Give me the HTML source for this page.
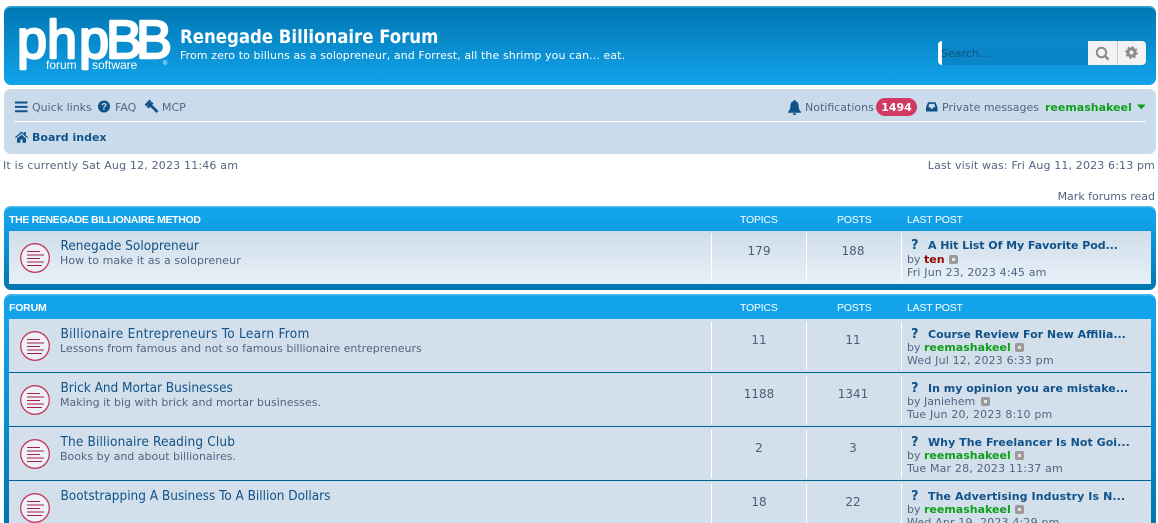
<!DOCTYPE html>
<html><head><meta charset="utf-8"><style>
html,body{margin:0;padding:0;background:#fff;width:1158px;height:523px;overflow:hidden}
body{position:relative;font:11px/14px "DejaVu Sans",sans-serif;color:#536482}
.a{position:absolute}
.t{position:absolute;white-space:nowrap;line-height:14px;transform:translateY(1px)}
.l{color:#105289}
.b{font-weight:bold}
.h{font:bold 10.5px/14px "Liberation Sans",sans-serif;color:#fff;letter-spacing:-.2px}
.ti{font:13.5px/16px "DejaVu Sans Condensed","DejaVu Sans",sans-serif;color:#105289;margin-left:.5px}
.n{font-size:12px;text-align:center;width:60px;color:#4c5d77}
.g{font-weight:bold;color:#0f9f1a}
.d{letter-spacing:.17px}
.s{letter-spacing:.05px}
.v{position:absolute;width:1px;background:#fff}
.x{position:absolute;width:9px;height:9px;background:#9a9a9a;border-radius:2px}
.x:after{content:"";position:absolute;left:3px;top:3px;width:3px;height:3px;background:#e6e6e6}
svg{position:absolute;overflow:visible}
</style></head><body>
<!-- header -->
<div class="a" style="left:4px;top:6px;width:1152px;height:79px;border-radius:7px;background:linear-gradient(#0076b1,#12a3eb);box-shadow:inset 0 1.5px 0 #36a8dc"></div>
<svg style="left:0;top:0" width="200" height="85">
<text x="17 47 79 106 136" y="58" font-family="Liberation Sans" font-size="54" fill="#fff" stroke="#fff" stroke-width="2.4" stroke-linejoin="round">phpBB</text>
<text x="46" y="69" font-family="Liberation Sans" font-size="12" fill="#fff">forum</text>
<text x="92" y="69" font-family="Liberation Sans" font-size="12" fill="#fff">software</text>
<text x="163" y="65" font-family="Liberation Sans" font-size="6" fill="#fff">®</text>
</svg>
<div class="t b" style="left:180px;top:27px;font:bold 18.4px/20px 'DejaVu Sans Condensed','DejaVu Sans',sans-serif;color:#fff">Renegade Billionaire Forum</div>
<div class="t" style="left:180px;top:48px;color:#fff;letter-spacing:.09px">From zero to billuns as a solopreneur, and Forrest, all the shrimp you can... eat.</div>
<!-- search -->
<div class="a" style="left:938px;top:41px;width:150px;height:24px;background:#0a86c8;border-radius:4px 0 0 4px;overflow:hidden"><div style="width:4px;height:24px;background:#fff"></div></div>
<div class="t" style="left:941px;top:46px;color:#14527c">Search...</div>
<div class="a" style="left:1088px;top:41px;width:58px;height:24px;background:#f2f2f2;border-radius:0 4px 4px 0"></div>
<div class="a" style="left:1117px;top:41px;width:1px;height:24px;background:#c8c8c8"></div>
<svg style="left:1095px;top:46px" width="15" height="15"><circle cx="6.5" cy="6.5" r="4.7" fill="none" stroke="#8a8a8a" stroke-width="2"/><path d="M10 10l3.6 3.6" stroke="#8a8a8a" stroke-width="2.4"/></svg>
<svg style="left:1125px;top:46px" width="14" height="14"><circle cx="6.5" cy="6.5" r="3.6" fill="none" stroke="#8a8a8a" stroke-width="3"/><circle cx="6.5" cy="6.5" r="5.2" fill="none" stroke="#8a8a8a" stroke-width="2.2" stroke-dasharray="2 2.08"/></svg>
<!-- nav -->
<div class="a" style="left:4px;top:89px;width:1152px;height:65px;border-radius:7px;background:#cadceb"></div>
<div class="a" style="left:14px;top:121px;width:1132px;height:1px;background:#fff"></div>
<svg style="left:15px;top:101px" width="13" height="12"><path d="M0 1.500h12.500M0 5.900h12.500M0 10.200h12.500" stroke="#105289" stroke-width="2"/></svg>
<div class="t" style="left:32px;top:100px">Quick links</div>
<svg style="left:98px;top:100px" width="13" height="13"><circle cx="6" cy="6.500" r="6" fill="#105289"/><text x="6" y="10" text-anchor="middle" font-family="Liberation Sans" font-weight="bold" font-size="10" fill="#cadceb">?</text></svg>
<div class="t" style="left:115px;top:100px">FAQ</div>
<svg style="left:145px;top:100px" width="14" height="14"><path d="M.5 5.500L5.500.5M2.600 7.600l5-5M4 3.800l3 3" stroke="#105289" stroke-width="2.600" fill="none"/><path d="M6.500 6l6 6" stroke="#105289" stroke-width="2.800"/></svg>
<div class="t" style="left:162px;top:100px">MCP</div>
<svg style="left:15px;top:131px" width="13" height="12"><path d="M6.500.5L0 6.200l.8.9L6.500 2.300l5.700 4.800.8-.9L10.800 4.300V1H9v1.700zM2 7.500v4.200h3.400V8.400h2.200v3.300H11V7.500L6.500 3.700z" fill="#105289"/></svg>
<div class="t b l" style="left:32px;top:130px">Board index</div>
<svg style="left:788px;top:100px" width="14" height="15"><path d="M6.500 0C7.300 0 7.600.6 7.600 1.300 10 1.900 10.600 3.800 10.600 6c0 3 1 4.500 2.400 5.800v.9H0v-.9C1.400 10.500 2.400 9 2.400 6 2.400 3.800 3 1.900 5.400 1.300 5.400.6 5.700 0 6.500 0zM4.800 13.400h3.400a1.700 1.700 0 0 1-3.400 0z" fill="#105289"/></svg>
<div class="t" style="left:805px;top:100px">Notifications</div>
<div class="a" style="left:876px;top:98px;width:41px;height:18px;border-radius:9px;background:#d13a63"></div>
<div class="t b" style="left:876px;top:100px;width:41px;text-align:center;color:#fff">1494</div>
<svg style="left:925px;top:101px" width="14" height="12"><path d="M1 6.500L3 1.200h7.500L12.500 6.500V10.500H1z" fill="#105289"/><path d="M3.300 6.300L4.300 2.900h5L10.300 6.300H8.300L7.700 7.700H5.800L5.200 6.300z" fill="#cadceb"/></svg>
<div class="t" style="left:942px;top:100px">Private messages</div>
<div class="t g" style="left:1045px;top:100px">reemashakeel</div>
<svg style="left:1137px;top:104px" width="10" height="7"><path d="M0 .5h8.500L4.250 5.500z" fill="#0f9f1a"/></svg>
<!-- info lines -->
<div class="t" style="left:3px;top:158px;letter-spacing:.18px">It is currently Sat Aug 12, 2023 11:46 am</div>
<div class="t" style="right:3px;top:158px;letter-spacing:.15px">Last visit was: Fri Aug 11, 2023 6:13 pm</div>
<div class="t" style="right:3px;top:189px">Mark forums read</div>
<!-- block 1 -->
<div class="a" style="left:4px;top:206px;width:1152px;height:84px;border-radius:7px;background:linear-gradient(#12a3eb 0,#12a3eb 15%,#0076b1 100%);box-shadow:inset 0 1.5px 0 #4dbbee"></div>
<div class="t h" style="left:9px;top:212px;letter-spacing:-.33px">THE RENEGADE BILLIONAIRE METHOD</div>
<div class="t h" style="left:740px;top:212px;font-weight:normal">TOPICS</div>
<div class="t h" style="left:837px;top:212px;font-weight:normal">POSTS</div>
<div class="t h" style="left:907px;top:212px;font-weight:normal">LAST POST</div>
<div class="a" style="left:9px;top:231px;width:1142px;height:53px;background:linear-gradient(#cfdce7,#e7f1f9)"></div>
<div class="v" style="left:711px;top:233px;height:49px"></div><div class="v" style="left:806px;top:233px;height:49px"></div><div class="v" style="left:901px;top:233px;height:49px"></div>
<svg style="left:20px;top:243px" width="30" height="30"><circle cx="15" cy="15" r="14.300" fill="#eef1f5" stroke="#c23a60" stroke-width="1.300"/><path d="M7 8.500h13M7 12h17M7 15.500h13M7 19h17M7 22.500h15" stroke="#a81c4e" stroke-width="1"/></svg>
<div class="t ti" style="left:60px;top:237px">Renegade Solopreneur</div>
<div class="t s" style="left:60px;top:253px;letter-spacing:.08px">How to make it as a solopreneur</div>
<div class="t n" style="left:729px;top:243px">179</div><div class="t n" style="left:823px;top:243px">188</div>
<div class="t b l" style="left:911px;top:238px;font-size:13px">?</div>
<div class="t b l" style="left:928px;top:238px;letter-spacing:-.05px">A Hit List Of My Favorite Pod...</div>
<div class="t" style="left:907px;top:252px">by <span class="b" style="color:#990000">ten</span></div><div class="x" style="left:949px;top:255px"></div>
<div class="t d" style="left:907px;top:265px">Fri Jun 23, 2023 4:45 am</div>
<!-- block 2 -->
<div class="a" style="left:4px;top:294px;width:1152px;height:240px;border-radius:7px 7px 0 0;background:linear-gradient(#12a3eb 0,#12a3eb 25px,#0076b1 230px);box-shadow:inset 0 1.5px 0 #4dbbee"></div>
<div class="t h" style="left:9px;top:300px">FORUM</div>
<div class="t h" style="left:740px;top:300px;font-weight:normal">TOPICS</div>
<div class="t h" style="left:837px;top:300px;font-weight:normal">POSTS</div>
<div class="t h" style="left:907px;top:300px;font-weight:normal">LAST POST</div>
<div class="a" style="left:9px;top:319px;width:1142px;height:210px;background:#d3e0eb"></div>
<div class="a" style="left:9px;top:372px;width:1142px;height:1px;background:#00608f"></div>
<div class="a" style="left:9px;top:426px;width:1142px;height:1px;background:#00608f"></div>
<div class="a" style="left:9px;top:480px;width:1142px;height:1px;background:#00608f"></div>
<div class="v" style="left:711px;top:322px;height:48px"></div><div class="v" style="left:806px;top:322px;height:48px"></div><div class="v" style="left:901px;top:322px;height:48px"></div>
<div class="v" style="left:711px;top:376px;height:48px"></div><div class="v" style="left:806px;top:376px;height:48px"></div><div class="v" style="left:901px;top:376px;height:48px"></div>
<div class="v" style="left:711px;top:430px;height:48px"></div><div class="v" style="left:806px;top:430px;height:48px"></div><div class="v" style="left:901px;top:430px;height:48px"></div>
<div class="v" style="left:711px;top:484px;height:48px"></div><div class="v" style="left:806px;top:484px;height:48px"></div><div class="v" style="left:901px;top:484px;height:48px"></div>
<!-- row 1 -->
<svg style="left:20px;top:331px" width="30" height="30"><circle cx="15" cy="15" r="14.300" fill="#eef1f5" stroke="#c23a60" stroke-width="1.300"/><path d="M7 8.500h13M7 12h17M7 15.500h13M7 19h17M7 22.500h15" stroke="#a81c4e" stroke-width="1"/></svg>
<div class="t ti" style="left:60px;top:325px;letter-spacing:.28px">Billionaire Entrepreneurs To Learn From</div>
<div class="t" style="left:60px;top:341px">Lessons from famous and not so famous billionaire entrepreneurs</div>
<div class="t n" style="left:729px;top:332px">11</div><div class="t n" style="left:823px;top:332px">11</div>
<div class="t b l" style="left:911px;top:327px;font-size:13px">?</div>
<div class="t b l" style="left:928px;top:327px">Course Review For New Affilia...</div>
<div class="t" style="left:907px;top:340px">by <span class="g">reemashakeel</span></div><div class="x" style="left:1015px;top:343px"></div>
<div class="t d" style="left:907px;top:353px">Wed Jul 12, 2023 6:33 pm</div>
<!-- row 2 -->
<svg style="left:20px;top:385px" width="30" height="30"><circle cx="15" cy="15" r="14.300" fill="#eef1f5" stroke="#c23a60" stroke-width="1.300"/><path d="M7 8.500h13M7 12h17M7 15.500h13M7 19h17M7 22.500h15" stroke="#a81c4e" stroke-width="1"/></svg>
<div class="t ti" style="left:60px;top:379px;letter-spacing:-.03px">Brick And Mortar Businesses</div>
<div class="t" style="left:60px;top:395px">Making it big with brick and mortar businesses.</div>
<div class="t n" style="left:729px;top:386px">1188</div><div class="t n" style="left:823px;top:386px">1341</div>
<div class="t b l" style="left:911px;top:381px;font-size:13px">?</div>
<div class="t b l" style="left:928px;top:381px">In my opinion you are mistake...</div>
<div class="t" style="left:907px;top:394px">by Janiehem</div><div class="x" style="left:981px;top:397px"></div>
<div class="t d" style="left:907px;top:407px">Tue Jun 20, 2023 8:10 pm</div>
<!-- row 3 -->
<svg style="left:20px;top:439px" width="30" height="30"><circle cx="15" cy="15" r="14.300" fill="#eef1f5" stroke="#c23a60" stroke-width="1.300"/><path d="M7 8.500h13M7 12h17M7 15.500h13M7 19h17M7 22.500h15" stroke="#a81c4e" stroke-width="1"/></svg>
<div class="t ti" style="left:60px;top:433px;letter-spacing:.14px">The Billionaire Reading Club</div>
<div class="t" style="left:60px;top:449px">Books by and about billionaires.</div>
<div class="t n" style="left:729px;top:440px">2</div><div class="t n" style="left:823px;top:440px">3</div>
<div class="t b l" style="left:911px;top:435px;font-size:13px">?</div>
<div class="t b l" style="left:928px;top:435px;letter-spacing:.05px">Why The Freelancer Is Not Goi...</div>
<div class="t" style="left:907px;top:448px">by <span class="g">reemashakeel</span></div><div class="x" style="left:1015px;top:451px"></div>
<div class="t d" style="left:907px;top:461px">Tue Mar 28, 2023 11:37 am</div>
<!-- row 4 -->
<svg style="left:20px;top:493px" width="30" height="30"><circle cx="15" cy="15" r="14.300" fill="#eef1f5" stroke="#c23a60" stroke-width="1.300"/><path d="M7 8.500h13M7 12h17M7 15.500h13M7 19h17M7 22.500h15" stroke="#a81c4e" stroke-width="1"/></svg>
<div class="t ti" style="left:60px;top:487px;letter-spacing:-.02px">Bootstrapping A Business To A Billion Dollars</div>
<div class="t n" style="left:729px;top:494px">18</div><div class="t n" style="left:823px;top:494px">22</div>
<div class="t b l" style="left:911px;top:489px;font-size:13px">?</div>
<div class="t b l" style="left:928px;top:489px;letter-spacing:.1px">The Advertising Industry Is N...</div>
<div class="t" style="left:907px;top:502px">by <span class="g">reemashakeel</span></div><div class="x" style="left:1015px;top:505px"></div>
<div class="t d" style="left:907px;top:515px">Wed Apr 19, 2023 4:29 pm</div>
</body></html>
